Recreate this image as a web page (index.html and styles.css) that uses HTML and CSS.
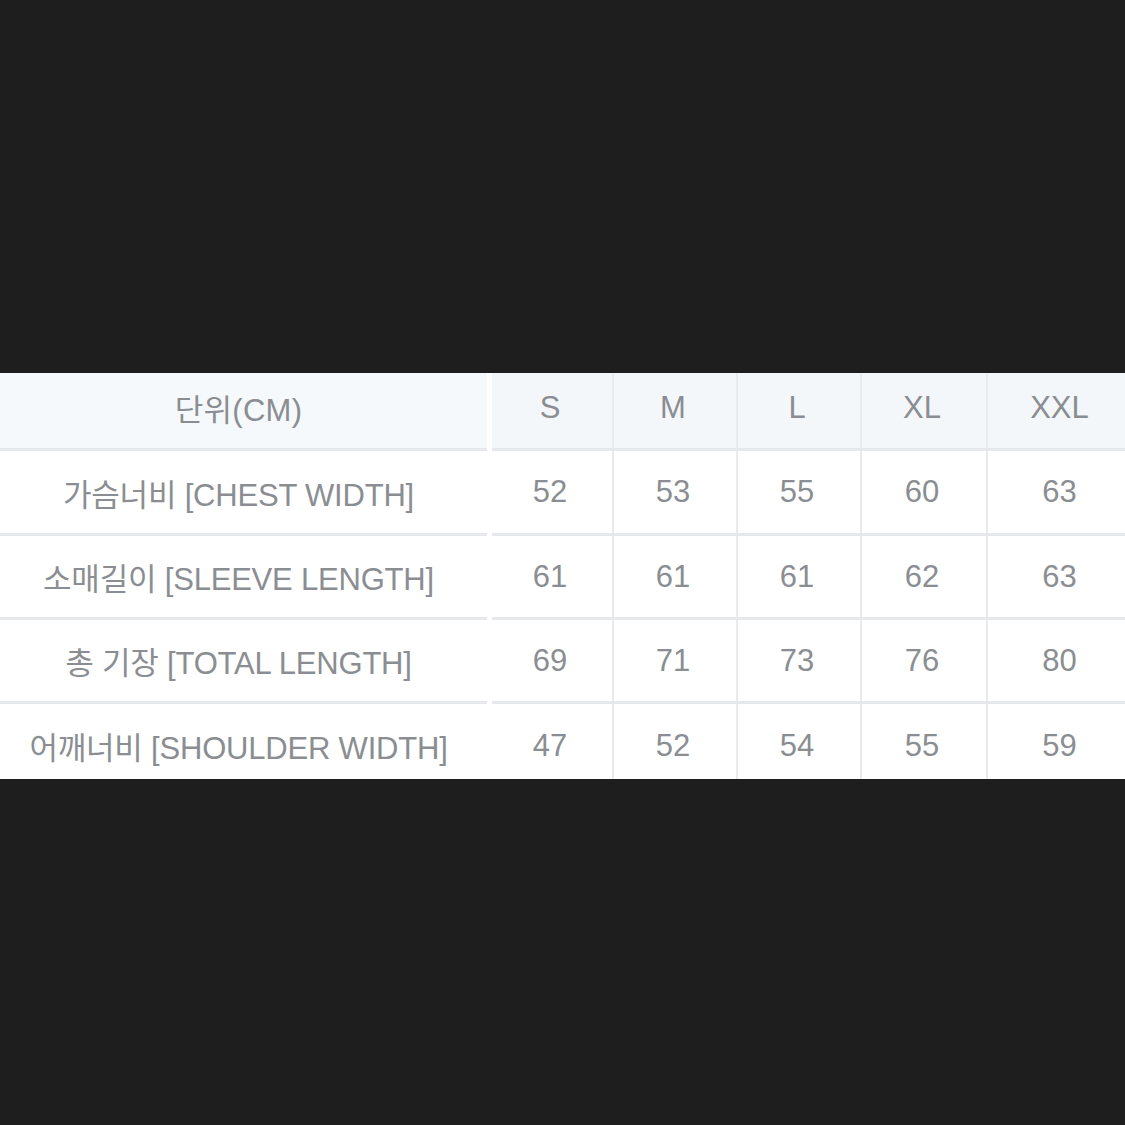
FILE: index.html
```html
<!DOCTYPE html>
<html lang="ko">
<head>
<meta charset="utf-8">
<title>Size chart</title>
<link rel="stylesheet" href="styles.css">
</head>
<body>
<div class="chart">
  <div class="cell head label">단위(CM)</div>
  <div class="cell head">S</div>
  <div class="cell head">M</div>
  <div class="cell head">L</div>
  <div class="cell head">XL</div>
  <div class="cell head last-col">XXL</div>

  <div class="cell label">가슴너비 [CHEST WIDTH]</div>
  <div class="cell">52</div>
  <div class="cell">53</div>
  <div class="cell">55</div>
  <div class="cell">60</div>
  <div class="cell last-col">63</div>

  <div class="cell label">소매길이 [SLEEVE LENGTH]</div>
  <div class="cell">61</div>
  <div class="cell">61</div>
  <div class="cell">61</div>
  <div class="cell">62</div>
  <div class="cell last-col">63</div>

  <div class="cell label">총 기장 [TOTAL LENGTH]</div>
  <div class="cell">69</div>
  <div class="cell">71</div>
  <div class="cell">73</div>
  <div class="cell">76</div>
  <div class="cell last-col">80</div>

  <div class="cell label last-row">어깨너비 [SHOULDER WIDTH]</div>
  <div class="cell last-row">47</div>
  <div class="cell last-row">52</div>
  <div class="cell last-row">54</div>
  <div class="cell last-row">55</div>
  <div class="cell last-row last-col">59</div>
</div>
</body>
</html>
```
FILE: styles.css
```css
html, body {
  margin: 0;
  padding: 0;
  background: #1e1e1e;
  width: 1125px;
  height: 1125px;
  overflow: hidden;
}

.chart {
  margin-top: 373px;
  background: #ffffff;
  display: grid;
  grid-template-columns: 492px 122px 124px 124px 126px 1fr;
  grid-template-rows: 78px 85px 84px 84px 75px;
  font-family: "Liberation Sans", "Noto Sans CJK KR", sans-serif;
  font-size: 31px;
  color: #8a8e92;
}

.cell {
  display: flex;
  align-items: center;
  justify-content: center;
  box-sizing: border-box;
  background: #ffffff;
  border-bottom: 3px solid #e6e8eb;
  border-right: 2px solid #e8eaec;
  white-space: nowrap;
  padding-right: 4px;
}

.cell.head {
  background: #f4f7fa;
  padding-bottom: 6px;
}

.cell.label {
  margin-right: 5px;
  border-right: none;
  letter-spacing: -0.2px;
  padding-right: 10px;
}

.cell.head.label {
  background: #f5f9fc;
  letter-spacing: 0.3px;
}

.cell.last-col {
  border-right: none;
  padding-right: 0;
  padding-left: 6px;
}

.cell.last-row {
  border-bottom: none;
  padding-top: 8px;
}
```
